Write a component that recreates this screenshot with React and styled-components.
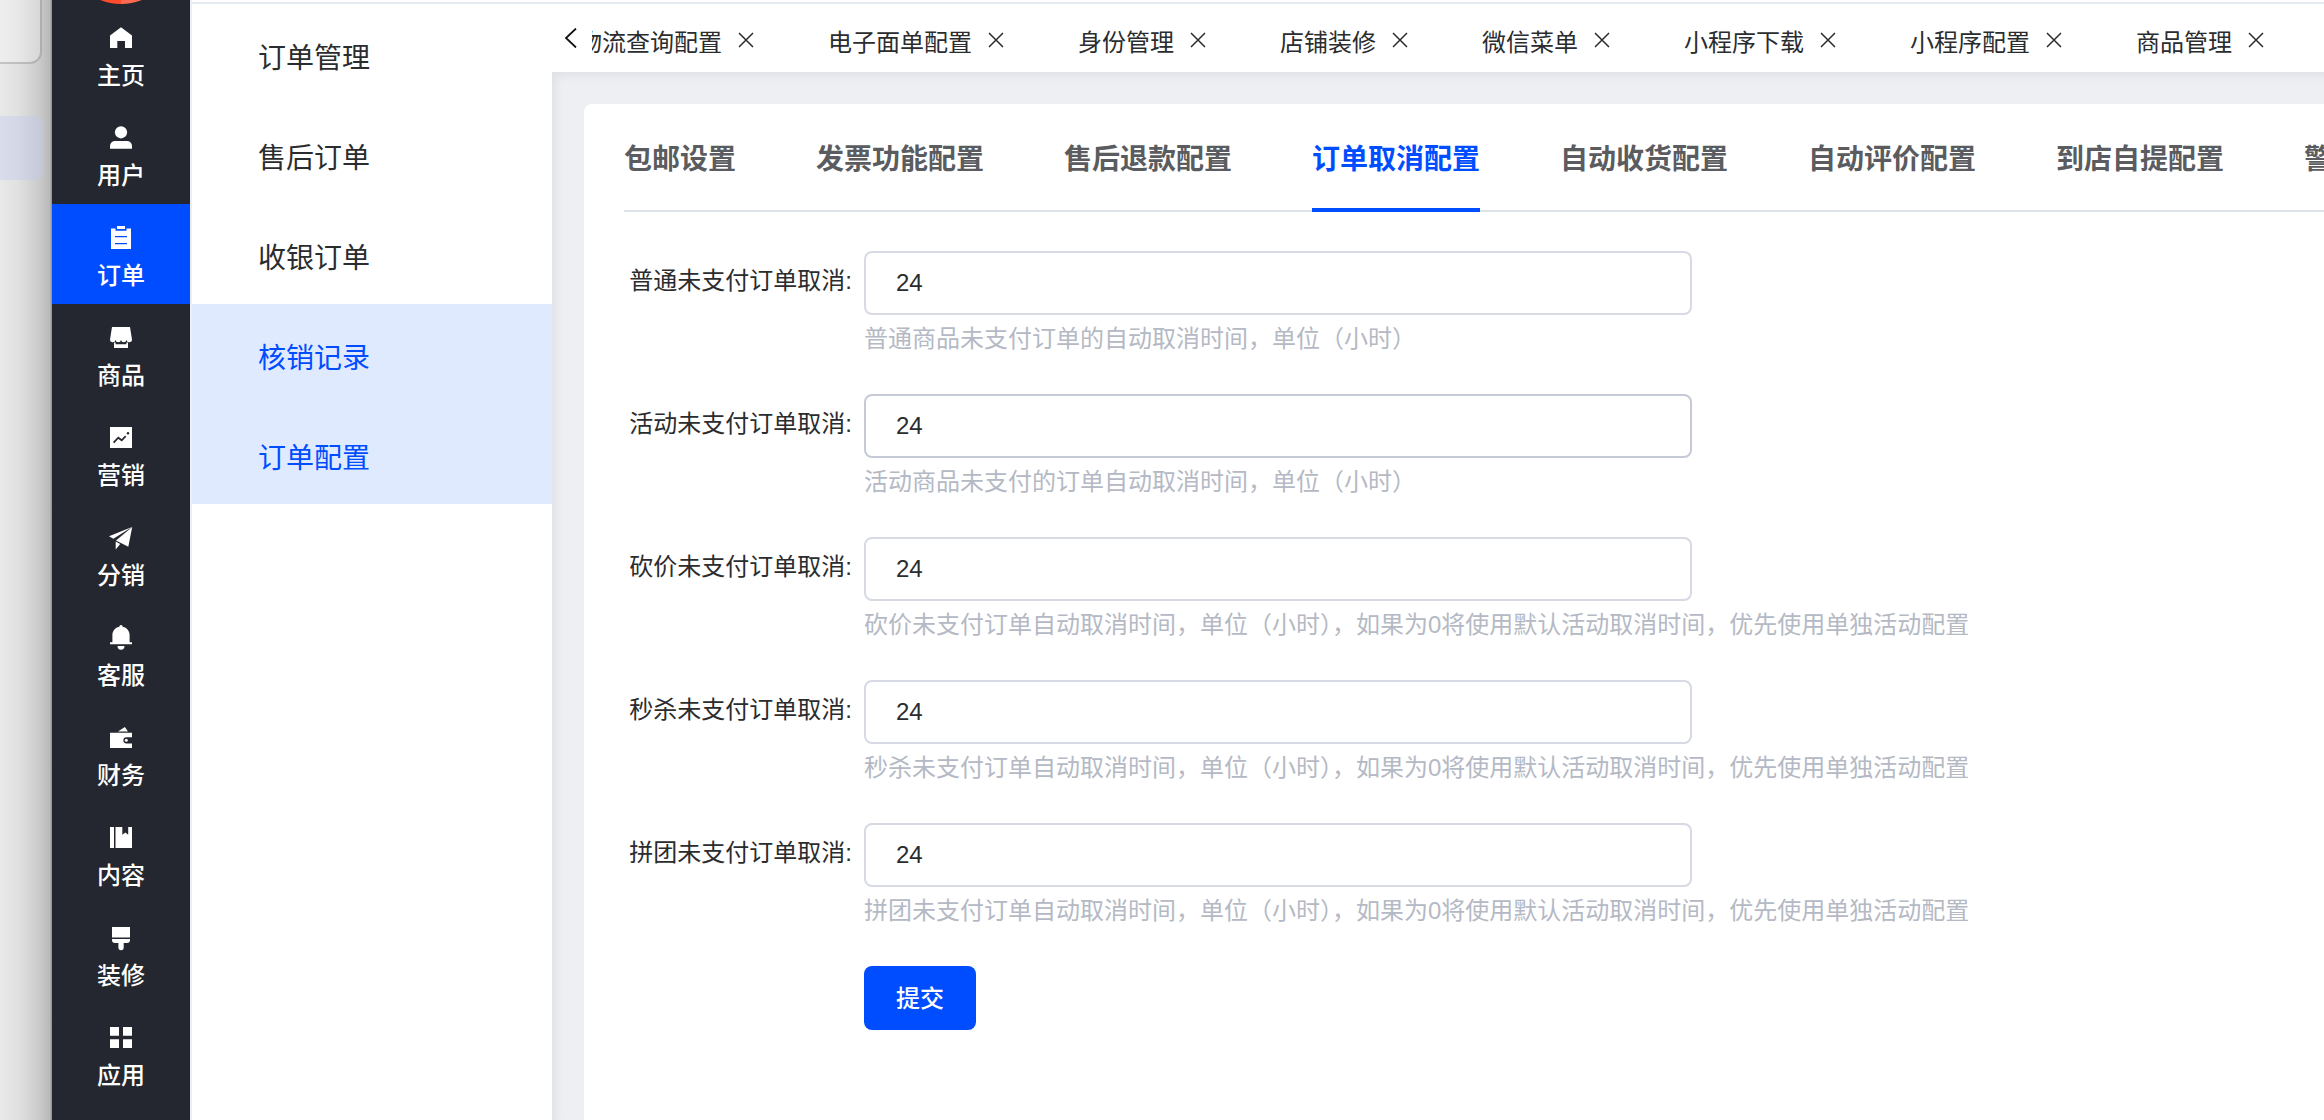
import React, { useState } from 'react';
import styled, { createGlobalStyle } from 'styled-components';

const BLUE = '#004dff';
const SANS = '"Liberation Sans", "Noto Sans CJK SC", sans-serif';

const GlobalStyle = createGlobalStyle`
  * { box-sizing: border-box; }
  body {
    margin: 0;
    background: #eeeff3;
    color: #2b2c2e;
    font-family: ${SANS};
    font-size: 24px;
  }
  button, input { font-family: inherit; font-size: inherit; color: inherit; }
`;

const Page = styled.div`
  display: flex;
  min-height: 100vh;
  overflow: hidden;
`;

const Backdrop = styled.div`
  flex: 0 0 52px;
  display: flex;
  flex-direction: column;
  gap: 52px;
  background: linear-gradient(90deg, #e9e9e9, #e0e0e0 35%, #cdcdcd 72%, #b9b9b9 96%, #8a8a8a);
`;

const BackdropPanel = styled.div`
  width: 42px;
  height: 64px;
  border: solid rgba(0, 0, 0, 0.18);
  border-width: 0 2px 2px 0;
  border-bottom-right-radius: 12px;
  background: rgba(255, 255, 255, 0.25);
`;

const BackdropPill = styled.div`
  width: 44px;
  height: 64px;
  border-radius: 0 10px 10px 0;
  background: rgba(190, 200, 240, 0.38);
`;

const Sidebar = styled.nav`
  flex: 0 0 138px;
  background: #24272f;
`;

const LogoSlot = styled.div`
  display: flex;
  flex-direction: column;
  align-items: center;
  justify-content: flex-end;
  height: 4px;
  overflow: hidden;
`;

const Logo = styled.div`
  flex: none;
  width: 112px;
  height: 112px;
  border-radius: 50%;
  background: linear-gradient(90deg, #ff4a2c 50%, #ff6a50 50%);
`;

const SideItem = styled.a`
  display: flex;
  flex-direction: column;
  align-items: center;
  gap: 8px;
  height: 100px;
  padding-top: 22px;
  color: #fff;
  font-weight: 500;
  line-height: 36px;
  text-decoration: none;
  background: ${(p) => (p.$active ? BLUE : 'transparent')};
`;

const SideIcon = styled.svg`
  flex: none;
  width: 24px;
  height: 24px;
  fill: #fff;
  overflow: visible;
`;

const SubMenu = styled.nav`
  flex: 0 0 362px;
  border-left: 2px solid #eceef4;
  background: #fff;
`;

const TopRule = styled.div`
  height: 4px;
  border-bottom: 2px solid #e6ebf3;
  background: #fff;
`;

const SubItem = styled.a`
  display: flex;
  align-items: center;
  height: 100px;
  padding: 4px 0 0 66px;
  font-size: 28px;
  text-decoration: none;
  color: ${(p) => (p.$active ? BLUE : '#2b2c2e')};
  background: ${(p) => (p.$active ? '#e0eaff' : 'transparent')};
`;

const Main = styled.main`
  flex: 1;
  min-width: 0;
  display: flex;
  flex-direction: column;
`;

const PageTabs = styled.div`
  display: flex;
  height: 68px;
  background: #fff;
`;

const BackButton = styled.button`
  flex: 0 0 40px;
  display: flex;
  padding: 24px 0 0 12px;
  border: 0;
  background: none;
`;

const PageTabScroller = styled.div`
  flex: 1;
  min-width: 0;
  display: flex;
  justify-content: flex-start;
  overflow: hidden;
`;

const PageTabStrip = styled.div`
  display: flex;
  gap: 73px;
  margin-left: -14px;
`;

const PageTab = styled.div`
  flex: none;
  display: flex;
  align-items: center;
  gap: 15px;
  padding-top: 4px;
  white-space: nowrap;
`;

const CloseButton = styled.button`
  display: flex;
  padding: 0;
  border: 0;
  background: none;
`;

const Content = styled.div`
  flex: 1;
  display: flex;
  padding: 32px 0 0 32px;
  box-shadow: inset 6px 6px 10px -2px rgba(0, 21, 41, 0.06);
`;

const Card = styled.section`
  flex: 1;
  min-width: 0;
  padding-left: 40px;
  border-top-left-radius: 8px;
  background: #fff;
  overflow: hidden;
`;

const ConfigTabs = styled.div`
  display: flex;
  gap: 80px;
  height: 108px;
  border-bottom: 2px solid #dde2e9;
`;

const ConfigTab = styled.button`
  flex: none;
  height: 108px;
  padding: 2px 0 0;
  border: 0;
  border-bottom: 4px solid ${(p) => (p.$active ? BLUE : 'transparent')};
  background: none;
  color: ${(p) => (p.$active ? BLUE : '#5a5c60')};
  font-size: 28px;
  font-weight: 600;
  white-space: nowrap;
`;

const Form = styled.form`
  display: grid;
  grid-template-columns: 228px minmax(0, 1fr);
  column-gap: 12px;
  padding-top: 39px;
`;

const Label = styled.label`
  padding-top: 12px;
  line-height: 36px;
  text-align: right;
  white-space: nowrap;
`;

const Field = styled.div`
  height: 143px;
`;

const TextInput = styled.input`
  display: block;
  width: 828px;
  max-width: 100%;
  height: 64px;
  padding: 0 30px;
  border: 2px solid ${(p) => (p.$hovered ? '#c5cad6' : '#d7dae5')};
  border-radius: 8px;
  background: #fff;
  outline: 0;
`;

const Hint = styled.p`
  margin: 6px 0 0;
  color: #b4b9c4;
  line-height: 36px;
  white-space: nowrap;
`;

const SubmitButton = styled.button`
  grid-column: 2;
  justify-self: start;
  width: 112px;
  height: 64px;
  padding: 0 0 4px;
  border: 0;
  border-radius: 8px;
  background: ${BLUE};
  color: #fff;
  font-weight: 500;
`;

const icons = {
  home: <path d="M12 1.2 23 9.5V22h-7v-7H8.3v7H1V9.5z" />,
  user: (
    <>
      <circle cx="12" cy="6.3" r="6.1" />
      <path d="M1 22.7V20a5 5 0 0 1 5-5h12a5 5 0 0 1 5 5v2.7z" />
    </>
  ),
  order: (
    <path
      fillRule="evenodd"
      d="M8 0h8v3H8zM2 2.5h4.5v2.3h11V2.5H22V23H2zM6 10v1.2h12V10zM6 17v1.2h12V17z"
    />
  ),
  shop: (
    <>
      <path d="M3 1h18l1.9 12a2.7 2.7 0 0 1-5.4 1 2.8 2.8 0 0 1-5.5 0 2.8 2.8 0 0 1-5.5 0 2.7 2.7 0 0 1-5.4-1z" />
      <path d="M5 16.5h1.6v1.7h10.8v-1.7H19V22H5z" />
    </>
  ),
  chart: (
    <>
      <path d="M1 1h22v21H1z" />
      <path d="m4.6 16.7 4.7-5 3.4 2.6 4-4.2" fill="none" stroke="#24272f" strokeWidth="1.7" />
      <circle cx="19" cy="7.3" r="1.2" fill="#24272f" />
    </>
  ),
  plane: <path d="M0 10.2 23 1 4.4 12.8zM23.2 1 19.3 20.7 7 14.4zM6.7 15.6l4.5 2.5-4.5 5.3z" />,
  bell: (
    <path d="M12-1a1.7 1.7 0 0 1 1.7 1.7C18 1.6 20.6 5 20.6 9v7.2H23v2H1v-2h2.4V9c0-4 2.6-7.4 6.9-8.3A1.7 1.7 0 0 1 12-1zM8.5 20h7a3.5 3.7 0 0 1-7 0z" />
  ),
  wallet: (
    <>
      <path d="M1 6.7h22v4.5h-5.5a3.1 3.1 0 0 0 0 6.3H23V22H1z" />
      <circle cx="17.3" cy="14.3" r="1.5" />
      <path d="M9 5.6 15.8 1 19 5.6z" />
    </>
  ),
  book: <path d="M1 1h4v21H1zM6.5 1h6.8v7.7l3-2.3 2.9 2.3V1H23v21H6.500z" />,
  brush: (
    <path d="M3 1h18v10.5H3zM3 13h18v1a3 3 0 0 1-3 3h-3.3v4.5a2.6 2.6 0 0 1-5.3 0V17H6a3 3 0 0 1-3-3z" />
  ),
  apps: <path d="M1 1h9v8.7H1zM14 1h9v8.7h-9zM1 13.3h9V22H1zM14 13.3h9V22h-9z" />,
};

const sideItems = [
  ['主页', 'home'],
  ['用户', 'user'],
  ['订单', 'order'],
  ['商品', 'shop'],
  ['营销', 'chart'],
  ['分销', 'plane'],
  ['客服', 'bell'],
  ['财务', 'wallet'],
  ['内容', 'book'],
  ['装修', 'brush'],
  ['应用', 'apps'],
];

const subItems = [
  { name: '订单管理' },
  { name: '售后订单' },
  { name: '收银订单' },
  { name: '核销记录', active: true },
  { name: '订单配置', active: true },
];

const pageTabs = [
  '物流查询配置',
  '电子面单配置',
  '身份管理',
  '店铺装修',
  '微信菜单',
  '小程序下载',
  '小程序配置',
  '商品管理',
];

const configTabs = [
  '包邮设置',
  '发票功能配置',
  '售后退款配置',
  '订单取消配置',
  '自动收货配置',
  '自动评价配置',
  '到店自提配置',
  '警',
];

const activityHint = '未支付订单自动取消时间，单位（小时），如果为0将使用默认活动取消时间，优先使用单独活动配置';

const fields = [
  { id: 'normal', kind: '普通', hint: '普通商品未支付订单的自动取消时间，单位（小时）' },
  { id: 'activity', kind: '活动', hint: '活动商品未支付的订单自动取消时间，单位（小时）', hovered: true },
  { id: 'bargain', kind: '砍价', hint: `砍价${activityHint}` },
  { id: 'seckill', kind: '秒杀', hint: `秒杀${activityHint}` },
  { id: 'group', kind: '拼团', hint: `拼团${activityHint}` },
];

export default function App() {
  const [activeTab, setActiveTab] = useState('订单取消配置');

  return (
    <>
      <GlobalStyle />
      <Page lang="zh-CN">
        <Backdrop>
          <BackdropPanel />
          <BackdropPill />
        </Backdrop>

        <Sidebar>
          <LogoSlot>
            <Logo />
          </LogoSlot>
          {sideItems.map(([name, icon]) => (
            <SideItem key={name} href="#" $active={name === '订单'}>
              <SideIcon viewBox="0 0 24 24" aria-hidden="true">
                {icons[icon]}
              </SideIcon>
              {name}
            </SideItem>
          ))}
        </Sidebar>

        <SubMenu>
          <TopRule />
          {subItems.map(({ name, active }) => (
            <SubItem key={name} href="#" $active={active}>
              {name}
            </SubItem>
          ))}
        </SubMenu>

        <Main>
          <TopRule />
          <PageTabs>
            <BackButton type="button" aria-label="向左滚动">
              <svg width="14" height="20" viewBox="0 0 14 20" fill="none" stroke="#111" strokeWidth="1.8">
                <path d="M12 0.5 2 10l10 9.5" />
              </svg>
            </BackButton>
            <PageTabScroller>
              <PageTabStrip>
                {pageTabs.map((name) => (
                  <PageTab key={name}>
                    {name}
                    <CloseButton type="button" aria-label={`关闭${name}`}>
                      <svg width="18" height="18" viewBox="0 0 18 18" stroke="#2b2c2e" strokeWidth="1.5">
                        <path d="m2 2 14 14M16 2 2 16" />
                      </svg>
                    </CloseButton>
                  </PageTab>
                ))}
              </PageTabStrip>
            </PageTabScroller>
          </PageTabs>

          <Content>
            <Card>
              <ConfigTabs role="tablist">
                {configTabs.map((name) => (
                  <ConfigTab
                    key={name}
                    type="button"
                    role="tab"
                    aria-selected={name === activeTab}
                    $active={name === activeTab}
                    onClick={() => setActiveTab(name)}
                  >
                    {name}
                  </ConfigTab>
                ))}
              </ConfigTabs>

              <Form onSubmit={(e) => e.preventDefault()}>
                {fields.map(({ id, kind, hint, hovered }) => (
                  <React.Fragment key={id}>
                    <Label htmlFor={id}>{kind}未支付订单取消:</Label>
                    <Field>
                      <TextInput id={id} defaultValue="24" $hovered={hovered} />
                      <Hint>{hint}</Hint>
                    </Field>
                  </React.Fragment>
                ))}
                <SubmitButton type="submit">提交</SubmitButton>
              </Form>
            </Card>
          </Content>
        </Main>
      </Page>
    </>
  );
}
